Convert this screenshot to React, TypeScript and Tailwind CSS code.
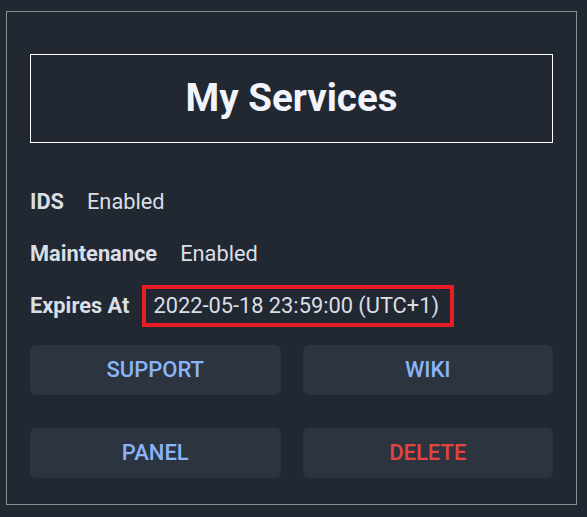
import React from "react";

export default function App() {
  const font = { fontFamily: "Roboto, 'Liberation Sans', sans-serif" };
  return (
    <div className="w-[587px] h-[517px] bg-[#222831] overflow-hidden" style={font}>
      <div className="ml-[6px] mt-[11px] w-[571px] border border-[#8b8e93] px-[23px] pt-[42px] pb-[26px]">
        <div className="h-[89px] border border-white flex items-center justify-center">
          <h1 className="text-[38.5px] font-bold text-[#f1f4fc] leading-none">My Services</h1>
        </div>
        <div className="mt-[33px] flex flex-col text-[21.8px] text-[#d9dee7]">
          <div className="h-[52px] flex items-center">
            <span className="font-bold mr-[23px]">IDS</span>
            <span>Enabled</span>
          </div>
          <div className="h-[52px] flex items-center">
            <span className="font-bold mr-[23px]">Maintenance</span>
            <span>Enabled</span>
          </div>
          <div className="h-[52px] flex items-center">
            <span className="font-bold mr-[13px]">Expires At</span>
            <span className="h-[42px] w-[312px] border-4 border-[#e81d25] pl-[7px] flex items-center">
              2022-05-18 23:59:00 (UTC+1)
            </span>
          </div>
        </div>
        <div className="mt-[13px] grid grid-cols-2 gap-x-[22px] gap-y-[33px] text-[22px] font-medium">
          <button className="h-[50px] rounded-md bg-[#2b343f] text-[#8ab4f8] leading-none">SUPPORT</button>
          <button className="h-[50px] rounded-md bg-[#2b343f] text-[#8ab4f8] leading-none">WIKI</button>
          <button className="h-[50px] rounded-md bg-[#2b343f] text-[#8ab4f8] leading-none">PANEL</button>
          <button className="h-[50px] rounded-md bg-[#2b343f] text-[#e5433d] leading-none">DELETE</button>
        </div>
      </div>
    </div>
  );
}
